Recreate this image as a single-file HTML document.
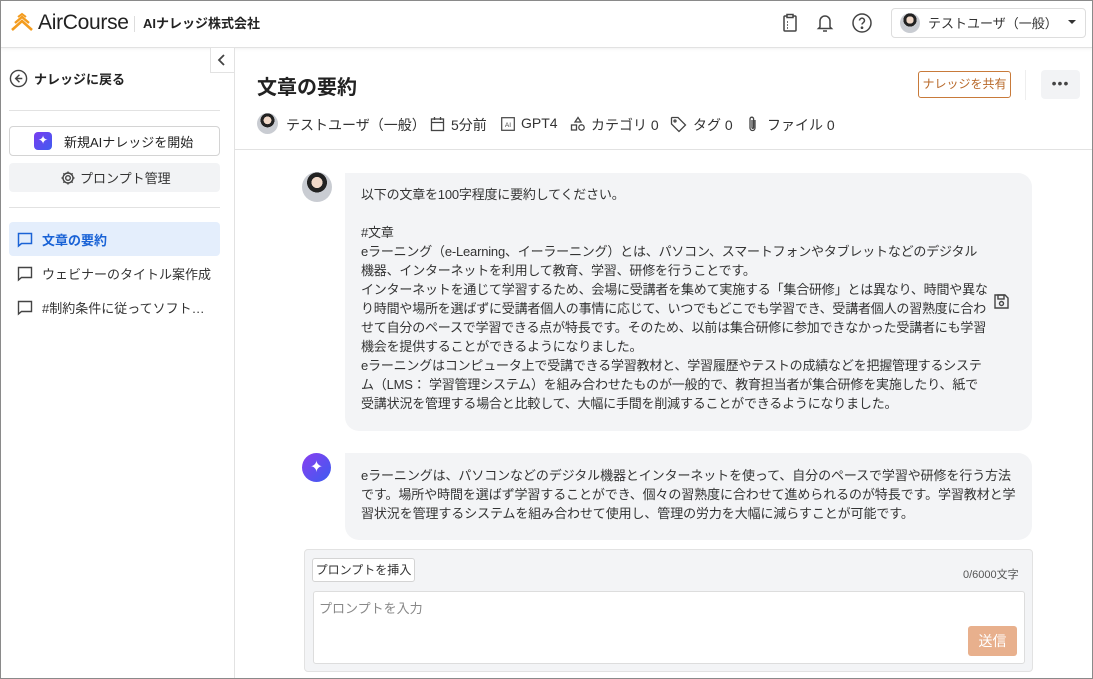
<!DOCTYPE html>
<html><head><meta charset="utf-8"><style>
*{box-sizing:border-box;margin:0;padding:0}
body{width:1093px;height:679px;overflow:hidden;font-family:"Liberation Sans","Noto Sans CJK JP",sans-serif;color:#333;background:#fff;position:relative}
.frame{position:absolute;inset:0;border:1px solid #8a8a8a;pointer-events:none;z-index:10}
.hdr{position:absolute;left:0;top:0;width:1093px;height:48px;border-bottom:1px solid #e2e2e2;box-shadow:0 1px 3px rgba(0,0,0,.06);background:#fff}
.abs{position:absolute}
.side{position:absolute;left:0;top:48px;width:235px;height:631px;border-right:1px solid #e2e2e2}
.sb{font-size:13px}
.av{border-radius:50%;background:radial-gradient(circle at 50% 35%,#f0d8c8 0 22%,#222 23% 40%,#c9ccd2 41%);overflow:hidden}
.msg{font-size:13px;line-height:19px;color:#333}
.nw{white-space:nowrap}
</style></head><body>
<div class="hdr">
 <svg class="abs" style="left:10px;top:12px" width="24" height="20" viewBox="0 0 24 20"><path d="M2 18 L12 9 L22 18" fill="none" stroke="#f39c1f" stroke-width="2.6"/><path d="M5 11 L12 5 L19 11" fill="none" stroke="#f39c1f" stroke-width="2.4"/><path d="M8 5 L12 2 L16 5" fill="none" stroke="#f39c1f" stroke-width="2"/></svg>
 <div class="abs" style="left:38px;top:11px;font-size:21px;color:#222;letter-spacing:-0.3px">AirCourse</div>
 <div class="abs" style="left:134px;top:16px;width:1px;height:16px;background:#ddd"></div>
 <div class="abs" style="left:143px;top:13px;font-size:13px;font-weight:bold;color:#222">AIナレッジ株式会社</div>
 <svg class="abs" style="left:780px;top:13px" width="20" height="20" viewBox="0 0 20 20" fill="none" stroke="#444" stroke-width="1.5"><rect x="4" y="3" width="12" height="15" rx="1"/><rect x="7" y="1.5" width="6" height="3" fill="#fff"/><path d="M7 9h1M7 12h1M7 15h1"/></svg>
 <svg class="abs" style="left:815px;top:12px" width="20" height="22" viewBox="0 0 20 22" fill="none" stroke="#444" stroke-width="1.5"><path d="M5 15V9a5 5 0 0110 0v6l1.5 1.5h-13z"/><path d="M8 19h4"/></svg>
 <svg class="abs" style="left:851px;top:12px" width="22" height="22" viewBox="0 0 22 22" fill="none" stroke="#444" stroke-width="1.5"><circle cx="11" cy="11" r="9"/><path d="M8.5 8.5a2.5 2.5 0 115 .3c0 1.7-2.5 2-2.5 3.7"/><circle cx="11" cy="15.7" r=".6" fill="#444"/></svg>
 <div class="abs" style="left:891px;top:8px;width:195px;height:30px;border:1px solid #ddd;border-radius:4px"></div>
 <div class="abs av" style="left:900px;top:13px;width:20px;height:20px"></div>
 <div class="abs" style="left:928px;top:13px;font-size:13px;color:#333">テストユーザ（一般）</div>
 <div class="abs" style="left:1068px;top:20px;border:4px solid transparent;border-top:4px solid #333;border-bottom:0"></div>
</div>
<div class="side">
 <div class="abs" style="left:210px;top:0;width:25px;height:25px;border:1px solid #e2e2e2;border-top:0;background:#fff"></div>
 <svg class="abs" style="left:216px;top:5px" width="12" height="14" viewBox="0 0 12 14"><path d="M8 2L3 7l5 5" fill="none" stroke="#444" stroke-width="1.8"/></svg>
 <svg class="abs" style="left:9px;top:21px" width="19" height="19" viewBox="0 0 20 20" fill="none" stroke="#444" stroke-width="1.5"><circle cx="10" cy="10" r="8.5"/><path d="M11 6l-4 4 4 4M7 10h7"/></svg>
 <div class="abs sb" style="left:34px;top:21px;font-weight:bold;color:#222">ナレッジに戻る</div>
 <div class="abs" style="left:9px;top:62px;width:211px;height:1px;background:#e2e2e2"></div>
 <div class="abs" style="left:9px;top:78px;width:211px;height:30px;border:1px solid #d4d4d4;border-radius:4px"></div>
 <div class="abs" style="left:34px;top:84px;width:18px;height:18px;border-radius:4px;background:linear-gradient(135deg,#7a3cf0,#3f5cf0)"></div>
 <div class="abs" style="left:38px;top:85px;color:#fff;font-size:12px">✦</div>
 <div class="abs sb" style="left:64px;top:84px;color:#222">新規AIナレッジを開始</div>
 <div class="abs" style="left:9px;top:115px;width:211px;height:29px;background:#f2f3f5;border-radius:4px"></div>
 <svg class="abs" style="left:60px;top:122px" width="16" height="16" viewBox="0 0 16 16" fill="none" stroke="#444" stroke-width="1.4"><circle cx="8" cy="8" r="2.3"/><path d="M8 1.5v2M8 12.5v2M1.5 8h2M12.5 8h2M3.4 3.4l1.4 1.4M11.2 11.2l1.4 1.4M3.4 12.6l1.4-1.4M11.2 4.8l1.4-1.4"/><circle cx="8" cy="8" r="5"/></svg>
 <div class="abs sb" style="left:80px;top:120px;color:#333">プロンプト管理</div>
 <div class="abs" style="left:9px;top:159px;width:211px;height:1px;background:#e2e2e2"></div>
 <div class="abs" style="left:9px;top:174px;width:211px;height:34px;background:#e4eefc;border-radius:4px"></div>
 <svg class="abs" style="left:17px;top:184px" width="16" height="16" viewBox="0 0 16 16" fill="none" stroke="#1a63d6" stroke-width="1.5"><path d="M1.5 1.5h13v10h-10l-3 2.5z"/></svg>
 <div class="abs sb" style="left:42px;top:182px;font-weight:bold;color:#1a63d6">文章の要約</div>
 <svg class="abs" style="left:17px;top:218px" width="16" height="16" viewBox="0 0 16 16" fill="none" stroke="#444" stroke-width="1.4"><path d="M1.5 1.5h13v10h-10l-3 2.5z"/></svg>
 <div class="abs sb" style="left:42px;top:216px">ウェビナーのタイトル案作成</div>
 <svg class="abs" style="left:17px;top:252px" width="16" height="16" viewBox="0 0 16 16" fill="none" stroke="#444" stroke-width="1.4"><path d="M1.5 1.5h13v10h-10l-3 2.5z"/></svg>
 <div class="abs sb" style="left:42px;top:250px">#制約条件に従ってソフト…</div>
</div>
<div class="abs" style="left:257px;top:71px;font-size:20px;font-weight:bold;color:#222">文章の要約</div>
<div class="abs" style="left:918px;top:71px;width:93px;height:27px;border:1px solid #c87a3a;border-radius:3px;font-size:12px;color:#b8692a;text-align:center;line-height:25px">ナレッジを共有</div>
<div class="abs" style="left:1025px;top:70px;width:1px;height:30px;background:#eee"></div>
<div class="abs" style="left:1041px;top:70px;width:39px;height:29px;background:#f2f3f5;border-radius:4px;text-align:center;font-size:14px;line-height:26px;color:#444;letter-spacing:1px">•••</div>
<div class="abs av" style="left:257px;top:113px;width:21px;height:21px"></div>
<div class="abs" style="left:286px;top:115px;font-size:14px;color:#333;white-space:nowrap">テストユーザ（一般）</div>
<svg class="abs" style="left:430px;top:116px" width="15" height="16" viewBox="0 0 15 16" fill="none" stroke="#444" stroke-width="1.3"><rect x="1.5" y="3" width="12" height="11.5"/><path d="M1.5 6.5h12M4.5 1v3M10.5 1v3"/></svg>
<div class="abs" style="left:451px;top:115px;font-size:14px">5分前</div>
<svg class="abs" style="left:501px;top:117px" width="14" height="14" viewBox="0 0 14 14"><rect x=".7" y=".7" width="12.6" height="12.6" fill="none" stroke="#444" stroke-width="1.2"/><text x="7" y="10" font-size="6.5" text-anchor="middle" font-family="Liberation Sans" fill="#444">AI</text></svg>
<div class="abs" style="left:521px;top:115px;font-size:14px">GPT4</div>
<svg class="abs" style="left:570px;top:116px" width="16" height="16" viewBox="0 0 16 16" fill="none" stroke="#444" stroke-width="1.3"><path d="M8 1.5l3 4.5H5z"/><rect x="1.5" y="9" width="5" height="5"/><circle cx="11.5" cy="11.5" r="2.7"/></svg>
<div class="abs" style="left:591px;top:115px;font-size:14px">カテゴリ 0</div>
<svg class="abs" style="left:670px;top:116px" width="17" height="17" viewBox="0 0 17 17" fill="none" stroke="#444" stroke-width="1.3"><path d="M1.5 2v6l7.5 7.5 6.5-6.5L8 1.5H2z"/><circle cx="5" cy="5" r="1"/></svg>
<div class="abs" style="left:693px;top:115px;font-size:14px">タグ 0</div>
<svg class="abs" style="left:746px;top:115px" width="14" height="18" viewBox="0 0 14 18" fill="none" stroke="#444" stroke-width="1.3"><path d="M9 5v8a2.5 2.5 0 01-5 0V4a1.8 1.8 0 013.6 0v8.5a.8.8 0 01-1.6 0V5"/></svg>
<div class="abs" style="left:767px;top:115px;font-size:14px">ファイル 0</div>
<div class="abs" style="left:235px;top:149px;width:858px;height:1px;background:#e2e2e2"></div>

<div class="abs av" style="left:302px;top:172px;width:30px;height:30px"></div>
<div class="abs" style="left:345px;top:173px;width:687px;height:258px;background:#f3f4f6;border-radius:0 14px 14px 14px"></div>
<div class="abs msg nw" style="left:361px;top:185px;letter-spacing:-0.2px">以下の文章を100字程度に要約してください。<br><br>#文章<br>eラーニング（e-Learning、イーラーニング）とは、パソコン、スマートフォンやタブレットなどのデジタル<br>機器、インターネットを利用して教育、学習、研修を行うことです。<br>インターネットを通じて学習するため、会場に受講者を集めて実施する「集合研修」とは異なり、時間や異な<br>り時間や場所を選ばずに受講者個人の事情に応じて、いつでもどこでも学習でき、受講者個人の習熟度に合わ<br>せて自分のペースで学習できる点が特長です。そのため、以前は集合研修に参加できなかった受講者にも学習<br>機会を提供することができるようになりました。<br>eラーニングはコンピュータ上で受講できる学習教材と、学習履歴やテストの成績などを把握管理するシステ<br>ム（LMS： 学習管理システム）を組み合わせたものが一般的で、教育担当者が集合研修を実施したり、紙で<br>受講状況を管理する場合と比較して、大幅に手間を削減することができるようになりました。</div>
<svg class="abs" style="left:993px;top:293px" width="17" height="17" viewBox="0 0 17 17" fill="none" stroke="#444" stroke-width="1.4"><path d="M2 2h10l3 3v10H2z"/><rect x="5" y="2" width="6" height="4"/><circle cx="8.5" cy="10.5" r="2"/></svg>

<div class="abs" style="left:302px;top:453px;width:29px;height:29px;border-radius:50%;background:linear-gradient(135deg,#8a3ef0,#3b5cf0);color:#fff;text-align:center;font-size:16px;line-height:29px">✦</div>
<div class="abs" style="left:345px;top:453px;width:687px;height:87px;background:#f3f4f6;border-radius:0 14px 14px 14px"></div>
<div class="abs msg nw" style="left:361px;top:466px;letter-spacing:-0.1px">eラーニングは、パソコンなどのデジタル機器とインターネットを使って、自分のペースで学習や研修を行う方法<br>です。場所や時間を選ばず学習することができ、個々の習熟度に合わせて進められるのが特長です。学習教材と学<br>習状況を管理するシステムを組み合わせて使用し、管理の労力を大幅に減らすことが可能です。</div>

<div class="abs" style="left:304px;top:549px;width:729px;height:123px;background:#f3f4f6;border:1px solid #e2e2e2;border-radius:4px"></div>
<div class="abs" style="left:312px;top:558px;width:103px;height:24px;background:#fff;border:1px solid #d4d4d4;border-radius:3px;font-size:12px;text-align:center;line-height:22px;color:#333">プロンプトを挿入</div>
<div class="abs" style="left:963px;top:566px;font-size:11px;color:#555">0/6000文字</div>
<div class="abs" style="left:313px;top:591px;width:712px;height:73px;background:#fff;border:1px solid #ddd;border-radius:3px"></div>
<div class="abs" style="left:319px;top:598px;font-size:13px;color:#888">プロンプトを入力</div>
<div class="abs" style="left:968px;top:626px;width:49px;height:30px;background:#e8b08d;border-radius:3px;color:#fff;font-size:14px;text-align:center;line-height:30px">送信</div>
<div class="frame"></div>
</body></html>
